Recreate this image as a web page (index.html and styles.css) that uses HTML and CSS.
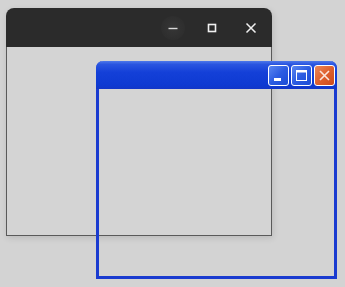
FILE: index.html
```html
<!DOCTYPE html>
<html lang="en">
<head>
    <meta charset="UTF-8">
    <title>Windows</title>
    <link rel="stylesheet" href="styles.css">
</head>
<body>
    <div class="desktop">
        <div class="win win-dark">
            <div class="dark-bar">
                <span class="dark-btn dark-min">
                    <svg width="12" height="12" viewBox="0 0 12 12"><path d="M1.5 6.5h9" stroke="#d8d8d8" stroke-width="1.4"/></svg>
                </span>
                <span class="dark-btn">
                    <svg width="12" height="12" viewBox="0 0 12 12"><rect x="2.5" y="2.5" width="7" height="7" fill="none" stroke="#f0f0f0" stroke-width="1.6"/></svg>
                </span>
                <span class="dark-btn">
                    <svg width="12" height="12" viewBox="0 0 12 12"><path d="M1.5 1.5l9 9M10.5 1.5l-9 9" stroke="#f0f0f0" stroke-width="1.5"/></svg>
                </span>
            </div>
            <div class="dark-body"></div>
        </div>

        <div class="win win-xp">
            <div class="xp-bar">
                <span class="xp-btn">
                    <svg width="19" height="19" viewBox="0 0 19 19"><rect x="5" y="12" width="7" height="3" fill="#fff"/></svg>
                </span>
                <span class="xp-btn">
                    <svg width="19" height="19" viewBox="0 0 19 19"><rect x="4.5" y="4.5" width="10" height="10" fill="none" stroke="#fff" stroke-width="1"/><rect x="4.5" y="4.5" width="10" height="2" fill="#fff"/></svg>
                </span>
                <span class="xp-btn xp-close">
                    <svg width="19" height="19" viewBox="0 0 19 19"><path d="M5 5l9 9M14 5l-9 9" stroke="#fbe6dc" stroke-width="1.6"/></svg>
                </span>
            </div>
            <div class="xp-body"></div>
        </div>
    </div>
</body>
</html>
```

FILE: styles.css
```css
body {
    margin: 0;
    background-color: #d3d3d3;
    font-family: "Liberation Sans", Arial, sans-serif;
}

.desktop {
    position: relative;
    width: 345px;
    height: 287px;
    overflow: hidden;
}

.win {
    position: absolute;
    display: flex;
    flex-direction: column;
    box-sizing: border-box;
}

/* dark window */
.win-dark {
    left: 6px;
    top: 8px;
    width: 266px;
    height: 228px;
    box-shadow: 1px 2px 6px rgba(0, 0, 0, 0.12);
    border-radius: 8px 8px 0 0;
}

.dark-bar {
    height: 39px;
    background-color: #2b2b2b;
    border-radius: 8px 8px 0 0;
    display: flex;
    align-items: center;
    justify-content: flex-end;
    padding-right: 9px;
    gap: 15px;
}

.dark-btn {
    width: 24px;
    height: 24px;
    border-radius: 50%;
    display: flex;
    align-items: center;
    justify-content: center;
}

.dark-min {
    background: radial-gradient(circle, #363636 0%, #2f2f2f 60%, #2b2b2b 100%);
}

.dark-body {
    flex: 1;
    background-color: #d4d4d4;
    border: 1px solid #5a5a5a;
    border-top: none;
}

/* xp window */
.win-xp {
    left: 96px;
    top: 61px;
    width: 241px;
    height: 218px;
    border: 3px solid #1a3bd0;
    border-top: none;
    border-radius: 7px 7px 0 0;
}

.xp-bar {
    height: 28px;
    margin: 0 -3px;
    border-radius: 7px 7px 0 0;
    background: linear-gradient(to bottom, #4d78ea 0%, #2a55e0 12%, #1440d8 40%, #0e3ad2 85%, #1236c8 100%);
    display: flex;
    align-items: center;
    justify-content: flex-end;
    padding-right: 2px;
    gap: 2px;
    box-sizing: border-box;
}

.xp-btn {
    width: 21px;
    height: 21px;
    box-sizing: border-box;
    border: 1px solid #fff;
    border-radius: 3px;
    background: linear-gradient(135deg, #5a86f0 0%, #2c5ce2 50%, #1c4cd6 100%);
    display: flex;
    align-items: center;
    justify-content: center;
}

.xp-close {
    background: linear-gradient(135deg, #ec8858 0%, #de602e 50%, #cc4a1c 100%);
}

.xp-body {
    flex: 1;
}
```
